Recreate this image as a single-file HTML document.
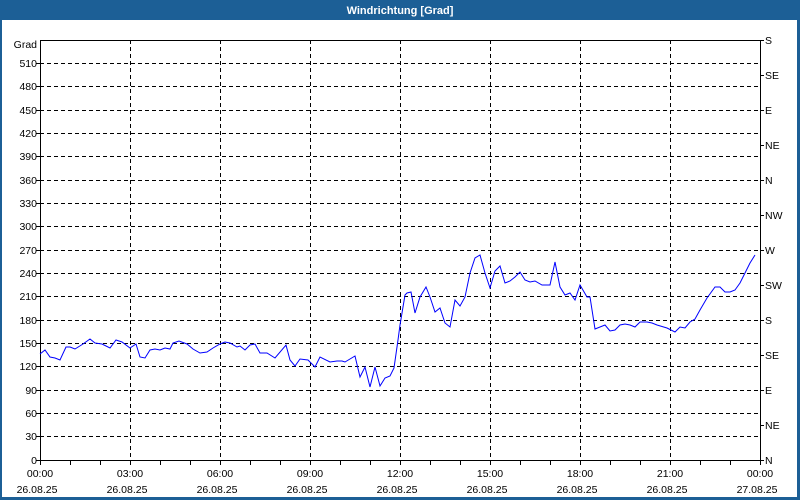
<!DOCTYPE html>
<html><head><meta charset="utf-8"><style>
html,body{margin:0;padding:0;width:800px;height:500px;overflow:hidden;background:#fff}
svg{display:block}
text{font-family:"Liberation Sans",sans-serif;font-size:10.5px;fill:#000}
</style></head><body>
<svg width="800" height="500" xmlns="http://www.w3.org/2000/svg">
<rect x="0" y="0" width="800" height="500" fill="#1c5f96"/>
<rect x="2" y="20" width="795" height="477" fill="#fff"/>
<text x="400" y="14" text-anchor="middle" style="font-weight:bold;fill:#fff;font-size:11px">Windrichtung [Grad]</text>
<g stroke="#000" stroke-width="1" stroke-dasharray="4,3" shape-rendering="crispEdges">
<line x1="40" y1="63.5" x2="760" y2="63.5"/><line x1="40" y1="86.5" x2="760" y2="86.5"/><line x1="40" y1="110.5" x2="760" y2="110.5"/><line x1="40" y1="133.5" x2="760" y2="133.5"/><line x1="40" y1="156.5" x2="760" y2="156.5"/><line x1="40" y1="180.5" x2="760" y2="180.5"/><line x1="40" y1="203.5" x2="760" y2="203.5"/><line x1="40" y1="226.5" x2="760" y2="226.5"/><line x1="40" y1="250.5" x2="760" y2="250.5"/><line x1="40" y1="273.5" x2="760" y2="273.5"/><line x1="40" y1="296.5" x2="760" y2="296.5"/><line x1="40" y1="320.5" x2="760" y2="320.5"/><line x1="40" y1="343.5" x2="760" y2="343.5"/><line x1="40" y1="366.5" x2="760" y2="366.5"/><line x1="40" y1="390.5" x2="760" y2="390.5"/><line x1="40" y1="413.5" x2="760" y2="413.5"/><line x1="40" y1="436.5" x2="760" y2="436.5"/>
<line x1="130.5" y1="40" x2="130.5" y2="460"/><line x1="220.5" y1="40" x2="220.5" y2="460"/><line x1="310.5" y1="40" x2="310.5" y2="460"/><line x1="400.5" y1="40" x2="400.5" y2="460"/><line x1="490.5" y1="40" x2="490.5" y2="460"/><line x1="580.5" y1="40" x2="580.5" y2="460"/><line x1="670.5" y1="40" x2="670.5" y2="460"/>
</g>
<g stroke="#000" stroke-width="1" shape-rendering="crispEdges" fill="none">
<path d="M40.5 40V460.5H760.5V40.5H40.5"/>
<path d="M70.5 460v5M100.5 460v5M130.5 460v5M160.5 460v5M190.5 460v5M220.5 460v5M250.5 460v5M280.5 460v5M310.5 460v5M340.5 460v5M370.5 460v5M400.5 460v5M430.5 460v5M460.5 460v5M490.5 460v5M520.5 460v5M550.5 460v5M580.5 460v5M610.5 460v5M640.5 460v5M670.5 460v5M700.5 460v5M730.5 460v5M760.5 460v5M40.5 460v5"/>
<path d="M36 63.5h4M36 86.5h4M36 110.5h4M36 133.5h4M36 156.5h4M36 180.5h4M36 203.5h4M36 226.5h4M36 250.5h4M36 273.5h4M36 296.5h4M36 320.5h4M36 343.5h4M36 366.5h4M36 390.5h4M36 413.5h4M36 436.5h4M36 460.5h4"/>
<path d="M760 40.5h4M760 75.5h4M760 110.5h4M760 145.5h4M760 180.5h4M760 215.5h4M760 250.5h4M760 285.5h4M760 320.5h4M760 355.5h4M760 390.5h4M760 425.5h4M760 460.5h4"/>
</g>
<g text-anchor="end">
<text x="37" y="48">Grad</text>
<text x="37" y="67">510</text><text x="37" y="90">480</text><text x="37" y="114">450</text><text x="37" y="137">420</text><text x="37" y="160">390</text><text x="37" y="184">360</text><text x="37" y="207">330</text><text x="37" y="230">300</text><text x="37" y="254">270</text><text x="37" y="277">240</text><text x="37" y="300">210</text><text x="37" y="324">180</text><text x="37" y="347">150</text><text x="37" y="370">120</text><text x="37" y="394">90</text><text x="37" y="417">60</text><text x="37" y="440">30</text><text x="37" y="464">0</text>
</g>
<g>
<text x="765" y="44">S</text><text x="765" y="79">SE</text><text x="765" y="114">E</text><text x="765" y="149">NE</text><text x="765" y="184">N</text><text x="765" y="219">NW</text><text x="765" y="254">W</text><text x="765" y="289">SW</text><text x="765" y="324">S</text><text x="765" y="359">SE</text><text x="765" y="394">E</text><text x="765" y="429">NE</text><text x="765" y="464">N</text>
</g>
<g text-anchor="middle">
<text x="40" y="477">00:00</text><text x="130" y="477">03:00</text><text x="220" y="477">06:00</text><text x="310" y="477">09:00</text><text x="400" y="477">12:00</text><text x="490" y="477">15:00</text><text x="580" y="477">18:00</text><text x="670" y="477">21:00</text><text x="760" y="477">00:00</text>
<text x="37" y="493">26.08.25</text><text x="127" y="493">26.08.25</text><text x="217" y="493">26.08.25</text><text x="307" y="493">26.08.25</text><text x="397" y="493">26.08.25</text><text x="487" y="493">26.08.25</text><text x="577" y="493">26.08.25</text><text x="667" y="493">26.08.25</text><text x="757" y="493">27.08.25</text>
</g>
<polyline fill="none" stroke="#0000ff" stroke-width="1" points="40,354 45,350 50,357 55,358 60,360 66,347 70,347 75,349 83,344 90,339 95,343 102,344 110,348 116,340 122,342 130,348 136,344 140,357 145,358 150,350 155,349 160,350 165,348 170,349 173,343 179,341 187,344 193,349 200,353 207,352 213,348 220,344 225,342 230,343 237,347 240,346 245,350 250,345 255,344 260,353 267,353 275,358 286,345 290,360 295,366 300,359 308,360 315,367 320,357 330,362 337,361 342,361 345,362 355,356 360,377 365,367 370,387 375,367 380,386 385,378 390,376 394,368 398,340 400,325 405,295 407,293 411,292 415,313 420,297 426,287 430,297 435,312 440,308 445,323 450,327 455,300 460,306 465,297 470,273 475,258 480,255 485,273 490,288 495,271 500,266 505,283 510,281 515,277 520,272 525,280 530,282 535,281 542,285 550,285 555,262 560,287 565,295 570,293 575,300 580,285 587,297 590,297 595,329 600,327 605,325 610,331 615,330 620,325 625,324 630,325 635,327 640,322 647,322 652,323 657,325 667,328 675,332 680,327 685,328 690,322 695,319 700,310 707,298 715,287 720,287 725,292 730,292 735,290 740,283 745,273 750,263 755,255"/>
</svg>
</body></html>
